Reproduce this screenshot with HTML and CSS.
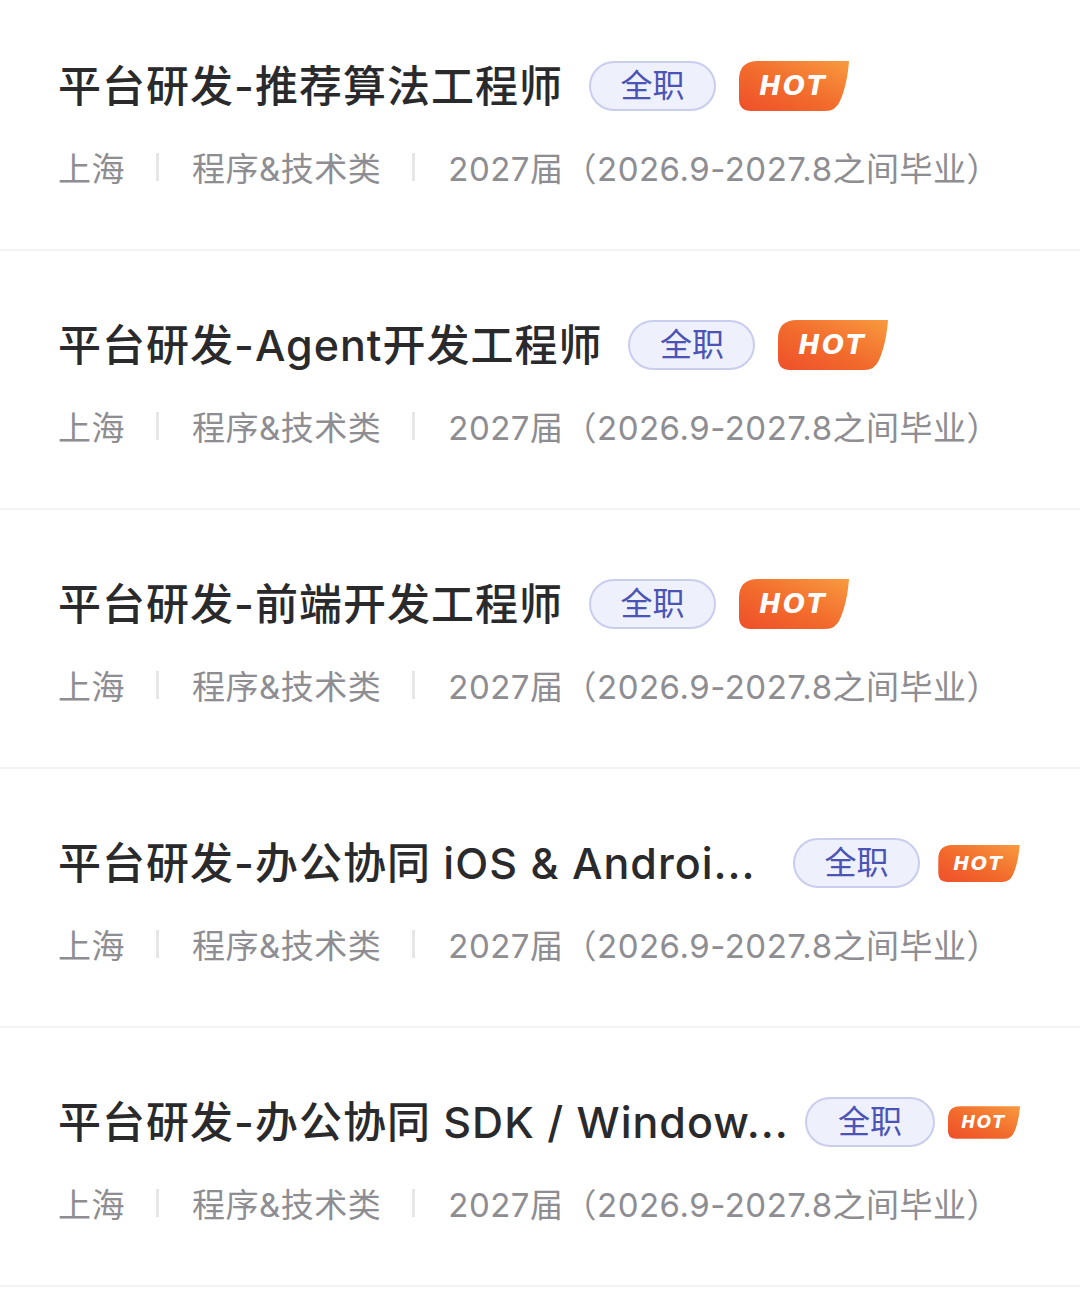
FILE: index.html
```html
<!DOCTYPE html>
<html>
  <head>
    <meta charset="utf-8">
    <title>职位列表</title>
    <link rel="stylesheet" href="styles.css">
  </head>
  <body>
    <ul class="job-list">

      <li class="job">
        <div class="job-head">
          <span class="job-title">平台研发-推荐算法工程师</span>
          <span class="tag">全职</span>
          <svg class="hot" viewBox="0 0 110 50"><use href="#hot-shape"/><text x="54" y="34" class="hot-text">HOT</text></svg>
        </div>
        <div class="job-meta">
          <span>上海</span><i class="sep"></i><span>程序&amp;技术类</span><i class="sep"></i><span>2027届（2026.9-2027.8之间毕业）</span>
        </div>
      </li>

      <li class="job">
        <div class="job-head">
          <span class="job-title">平台研发-Agent开发工程师</span>
          <span class="tag">全职</span>
          <svg class="hot" viewBox="0 0 110 50"><use href="#hot-shape"/><text x="54" y="34" class="hot-text">HOT</text></svg>
        </div>
        <div class="job-meta">
          <span>上海</span><i class="sep"></i><span>程序&amp;技术类</span><i class="sep"></i><span>2027届（2026.9-2027.8之间毕业）</span>
        </div>
      </li>

      <li class="job">
        <div class="job-head">
          <span class="job-title">平台研发-前端开发工程师</span>
          <span class="tag">全职</span>
          <svg class="hot" viewBox="0 0 110 50"><use href="#hot-shape"/><text x="54" y="34" class="hot-text">HOT</text></svg>
        </div>
        <div class="job-meta">
          <span>上海</span><i class="sep"></i><span>程序&amp;技术类</span><i class="sep"></i><span>2027届（2026.9-2027.8之间毕业）</span>
        </div>
      </li>

      <li class="job">
        <div class="job-head job-head--long">
          <span class="job-title">平台研发-办公协同 iOS &amp; Androi...</span>
          <span class="tag">全职</span>
          <svg class="hot hot--md" viewBox="0 0 110 50"><use href="#hot-shape"/><text x="54" y="34" class="hot-text">HOT</text></svg>
        </div>
        <div class="job-meta">
          <span>上海</span><i class="sep"></i><span>程序&amp;技术类</span><i class="sep"></i><span>2027届（2026.9-2027.8之间毕业）</span>
        </div>
      </li>

      <li class="job">
        <div class="job-head job-head--long">
          <span class="job-title">平台研发-办公协同 SDK / Window...</span>
          <span class="tag tag--wide">全职</span>
          <svg class="hot hot--sm" viewBox="0 0 110 50"><use href="#hot-shape"/><text x="54" y="34" class="hot-text">HOT</text></svg>
        </div>
        <div class="job-meta">
          <span>上海</span><i class="sep"></i><span>程序&amp;技术类</span><i class="sep"></i><span>2027届（2026.9-2027.8之间毕业）</span>
        </div>
      </li>

    </ul>

    <svg class="defs" width="0" height="0">
      <defs>
        <linearGradient id="hot-fill" x1="1" y1="0" x2="0" y2="1">
          <stop offset="0" stop-color="#f89a3f"/>
          <stop offset="0.55" stop-color="#f26a2c"/>
          <stop offset="1" stop-color="#ee4f2a"/>
        </linearGradient>
        <path id="hot-shape" fill="url(#hot-fill)"
              d="M19 0 H110 C109 14 106 29 101 40 Q97 50 86 50 H12 Q0 50 0 38 V19 Q0 0 19 0 Z"/>
      </defs>
    </svg>
  </body>
</html>
```

FILE: styles.css
```css
body {
  margin: 0;
  background: #fff;
  font-family: Inter, "Noto Sans CJK SC", sans-serif;
}

.job-list {
  list-style: none;
  margin: 0;
  padding: 0;
}

.job {
  padding: 64px 60px 60px 58px;
  border-bottom: 2px solid #f4f4f5;
}

.job:first-child {
  padding-top: 56px;
}

.job-head {
  display: flex;
  align-items: center;
  height: 60px;
}

.job-title {
  white-space: nowrap;
  font-size: 43px;
  font-weight: 500;
  letter-spacing: 1px;
  color: #2a2a2c;
  line-height: 60px;
}

.tag {
  flex: 0 0 auto;
  box-sizing: border-box;
  width: 127px;
  height: 50px;
  margin-left: 26px;
  border: 2px solid #c9cdee;
  border-radius: 25px;
  background: #eef0fc;
  color: #4b54b6;
  font-size: 32px;
  line-height: 46px;
  text-align: center;
}

.tag--wide {
  width: 130px;
}

.job-head--long .tag {
  margin-left: auto;
}

.hot {
  flex: 0 0 auto;
  width: 110px;
  height: 50px;
  margin-left: 23px;
}

.hot--md {
  width: 82px;
  height: 37px;
  margin-left: 18px;
}

.hot--sm {
  width: 72px;
  height: 33px;
  margin-left: 13px;
}

.hot-text {
  fill: #fff;
  font-family: "DejaVu Sans", sans-serif;
  font-size: 26px;
  font-weight: bold;
  font-style: italic;
  letter-spacing: 2px;
  text-anchor: middle;
}

.job-meta {
  display: flex;
  align-items: center;
  margin-top: 29px;
  height: 44px;
  font-size: 33px;
  letter-spacing: 0.5px;
  color: #8d8d92;
}

.sep {
  width: 3px;
  height: 28px;
  margin: 0 33px 0 31px;
  background: #e6e6e8;
}

.defs {
  position: absolute;
}
```
